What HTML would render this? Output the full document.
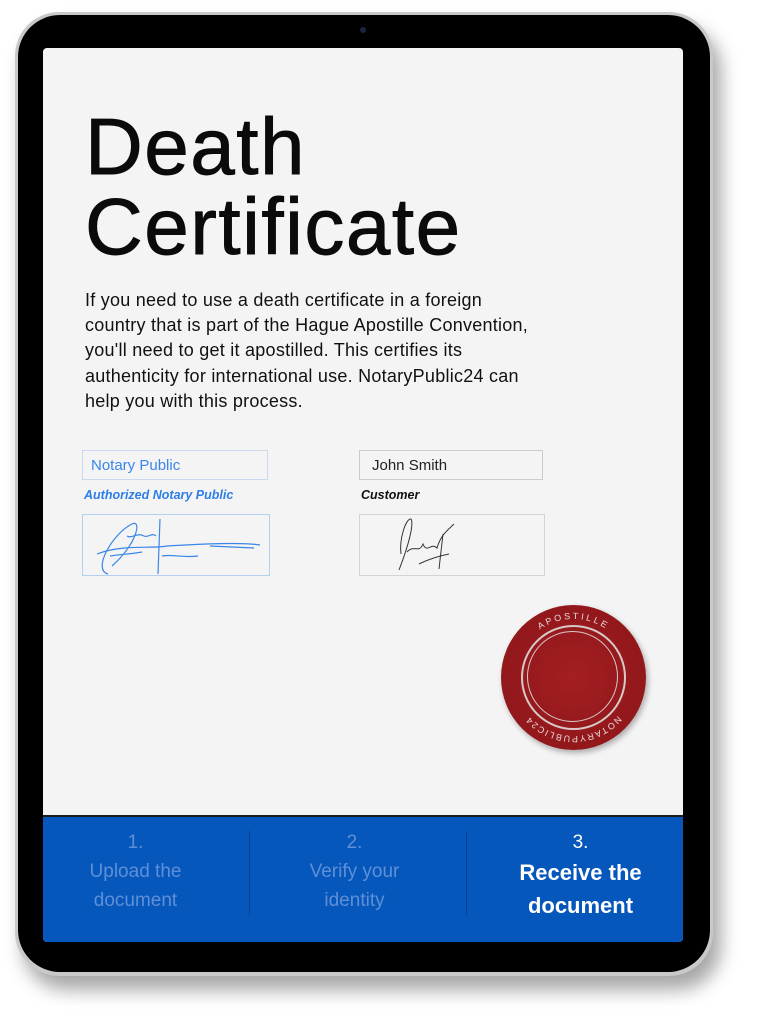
<!DOCTYPE html>
<html><head><meta charset="utf-8"><style>
body{margin:0;width:759px;height:1024px;background:#fff;position:relative;overflow:hidden;font-family:"Liberation Sans",sans-serif}
.rim{position:absolute;left:15px;top:12px;width:698px;height:964px;border-radius:44px;background:#c9c9c9;box-shadow:8px 14px 18px rgba(0,0,0,.35)}
.body{position:absolute;left:18px;top:15px;width:692px;height:957px;border-radius:42px;background:#000}
.cam{position:absolute;left:360px;top:27px;width:6px;height:6px;border-radius:50%;background:#1a2540}
.screen{position:absolute;left:43px;top:48px;width:640px;height:894px;background:#f4f4f4;border-radius:4px;overflow:hidden}
h1{position:absolute;left:42px;top:59px;margin:0;font-size:80px;line-height:80px;font-weight:normal;-webkit-text-stroke:0.9px #0b0b0b;color:#0b0b0b;letter-spacing:1.5px}
p{position:absolute;left:42px;top:240px;margin:0;width:560px;font-size:18px;line-height:25.2px;color:#111;letter-spacing:0.25px}
.box{position:absolute;border:1px solid #c9d9ef;background:#f4f4f4}
.lbl{position:absolute;font-size:12.5px;font-weight:bold;font-style:italic}
.bar{position:absolute;left:0;top:767px;width:640px;height:127px;background:#0657bc;border-top:2px solid #1c1c1c}
.col{position:absolute;top:11px;width:213px;text-align:center;color:#5e8fd6;font-size:19px;line-height:29px}
.sep{position:absolute;top:14px;width:1px;height:84px;background:#0a3f8a}
</style></head><body>
<div class="rim"></div><div class="body"></div><div class="cam"></div>
<div class="screen">
<h1>Death<br>Certificate</h1>
<p>If you need to use a death certificate in a foreign<br>country that is part of the Hague Apostille Convention,<br>you'll need to get it apostilled. This certifies its<br>authenticity for international use. NotaryPublic24 can<br>help you with this process.</p>
<div class="box" style="left:39px;top:402px;width:186px;height:30px;font-size:15px;line-height:30px;color:#3a86e8;padding-left:8px;box-sizing:border-box">Notary Public</div>
<div class="lbl" style="left:41px;top:440px;color:#2d7ee6">Authorized Notary Public</div>
<div class="box" style="left:39px;top:466px;width:186px;height:60px;border-color:#b5cff0"></div>
<svg style="position:absolute;left:39px;top:466px" width="188" height="62"><g fill="none" stroke="#3a86e8" stroke-width="1.2"><path d="M26 60 C10 56 30 20 50 10 C60 5 55 30 30 52 M15 40 C40 30 70 35 85 32 C120 30 160 28 178 31 M28 42 C40 40 50 40 60 38 M45 22 C50 25 55 18 62 22 C66 24 70 18 74 22 M78 5 L76 60 M80 42 C90 40 100 44 116 42 M128 32 L172 34"/></g></svg>
<div class="box" style="left:316px;top:402px;width:184px;height:30px;border-color:#ccc;font-size:15px;line-height:30px;color:#222;padding-left:12px;box-sizing:border-box">John Smith</div>
<div class="lbl" style="left:318px;top:440px;color:#111">Customer</div>
<div class="box" style="left:316px;top:466px;width:184px;height:60px;border-color:#d4d4d4"></div>
<svg style="position:absolute;left:316px;top:466px" width="186" height="62"><g fill="none" stroke="#333" stroke-width="1"><path d="M40 56 C50 30 55 10 52 5 C47 4 40 25 42 40 M48 38 C55 30 60 40 64 30 C68 40 72 28 78 34 C82 20 90 15 95 10 M60 50 C70 45 80 42 90 40 M84 20 L80 55"/></g></svg>
<div style="position:absolute;left:458px;top:557px;width:145px;height:145px;border-radius:50%;background:radial-gradient(circle,#a31e22,#8a1518);box-shadow:2px 3px 6px rgba(0,0,0,.3)"></div>
<div style="position:absolute;left:478px;top:577px;width:101px;height:101px;border-radius:50%;border:2px solid #d8c8c8"></div>
<div style="position:absolute;left:484px;top:583px;width:89px;height:89px;border-radius:50%;border:1.5px solid #d8c8c8"></div>
<svg style="position:absolute;left:458px;top:557px" width="145" height="145"><defs><path id="c1" d="M14 72.5 A58.5 58.5 0 0 1 131 72.5"/><path id="c2" d="M131 72.5 A58.5 58.5 0 0 1 14 72.5"/></defs><text font-size="9" fill="#e8d8d8" letter-spacing="2.5" font-family="Liberation Sans"><textPath href="#c1" startOffset="50%" text-anchor="middle">APOSTILLE</textPath></text><text font-size="9" fill="#e8d8d8" letter-spacing="1.5" font-family="Liberation Sans"><textPath href="#c2" startOffset="50%" text-anchor="middle">NOTARYPUBLIC24</textPath></text></svg>
<div class="bar">
<div class="col" style="left:-14px">1.<br>Upload the<br>document</div>
<div class="sep" style="left:206px"></div>
<div class="col" style="left:205px">2.<br>Verify your<br>identity</div>
<div class="sep" style="left:423px"></div>
<div class="col" style="left:431px;color:#fff;top:12px;line-height:27px">3.<br><b style="font-size:22px;line-height:33px">Receive the<br>document</b></div>
</div>
</div>
</body></html>
